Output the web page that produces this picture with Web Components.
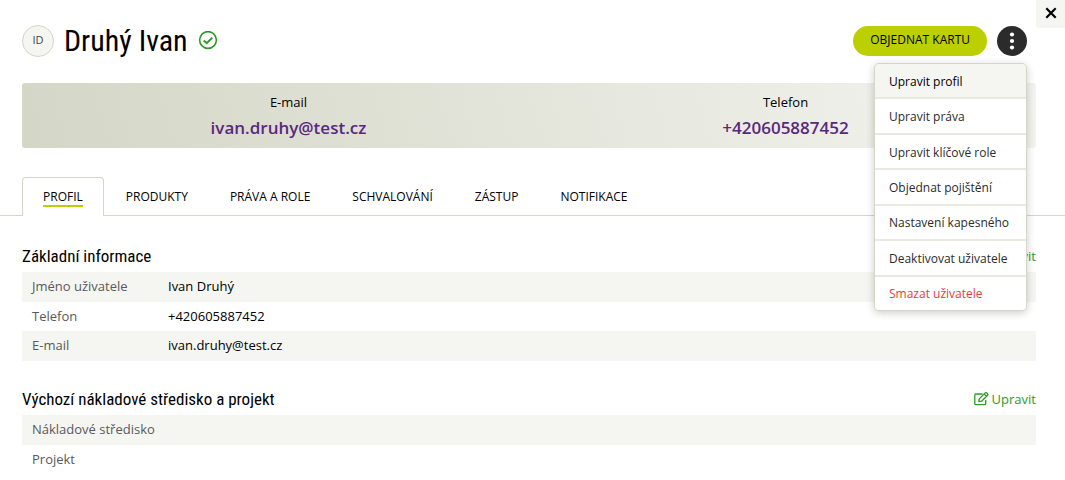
<!DOCTYPE html>
<html lang="cs">
<head>
<meta charset="utf-8">
<title>Druhý Ivan</title>
<meta name="viewport" content="width=device-width, initial-scale=1">
<style>
  :root {
    --ink: #000;
    --muted: #58595b;
    --pale: #f5f6f2;
    --line: #d4d6c8;
    --lime: #bccf00;
    --green: #2f9a2a;
    --purple: #59287d;
    --head: "Liberation Sans Narrow", "Roboto Condensed", "Roboto", sans-serif;
  }
  body { margin: 0; background: #fff; color: var(--ink); font: 13px/20px "Open Sans", sans-serif; }
</style>
</head>
<body>
<profile-page>
  <close-button slot="close"></close-button>
  <profile-header slot="header" initials="ID" name="Druhý Ivan">
    <pill-button>Objednat kartu</pill-button>
    <action-menu>
      <menu-item active>Upravit profil</menu-item>
      <menu-item>Upravit práva</menu-item>
      <menu-item>Upravit klíčové role</menu-item>
      <menu-item>Objednat pojištění</menu-item>
      <menu-item>Nastavení kapesného</menu-item>
      <menu-item>Deaktivovat uživatele</menu-item>
      <menu-item danger>Smazat uživatele</menu-item>
    </action-menu>
  </profile-header>
  <contact-banner slot="banner">
    <contact-item label="E-mail" href="mailto:ivan.druhy@test.cz">ivan.druhy@test.cz</contact-item>
    <contact-item label="Telefon" href="tel:+420605887452">+420605887452</contact-item>
  </contact-banner>
  <tab-bar slot="tabs">
    <tab-item active>Profil</tab-item>
    <tab-item>Produkty</tab-item>
    <tab-item>Práva a role</tab-item>
    <tab-item>Schvalování</tab-item>
    <tab-item>Zástup</tab-item>
    <tab-item>Notifikace</tab-item>
  </tab-bar>
  <info-section heading="Základní informace" rows='[["Jméno uživatele","Ivan Druhý"],["Telefon","+420605887452"],["E-mail","ivan.druhy@test.cz"]]'></info-section>
  <info-section heading="Výchozí nákladové středisko a projekt" rows='[["Nákladové středisko",""],["Projekt",""]]'></info-section>
</profile-page>

<script>
const define = (name, render) => customElements.define(name, class extends HTMLElement {
  connectedCallback() {
    if (this.shadowRoot) return;
    const root = this.attachShadow({ mode: "open" });
    root.innerHTML = "<style>*{box-sizing:border-box}button{font:inherit;cursor:pointer}</style>" + render(this);
  }
});

define("profile-page", () => `
  <style>
    :host { display: block; position: relative; }
    .inset { padding-left: 22px; padding-right: 29px; }
    header { padding-top: 25px; }
    .banner { padding-top: 26px; }
    .tabs { margin-top: 29px; }
    main { display: grid; gap: 28px; padding-top: 30px; padding-bottom: 4px; }
    .close { position: absolute; top: 0; right: 0; }
  </style>
  <header class="inset"><slot name="header"></slot></header>
  <div class="inset banner"><slot name="banner"></slot></div>
  <nav class="tabs"><slot name="tabs"></slot></nav>
  <main class="inset"><slot></slot></main>
  <div class="close"><slot name="close"></slot></div>`);

define("close-button", () => `
  <style>
    :host { display: block; }
    button { display: grid; place-items: center; width: 29px; height: 28px; padding: 0 0 2px; border: 0; border-radius: 0 0 0 4px; background: var(--pale); }
  </style>
  <button type="button" aria-label="Zavřít">
    <svg width="12" height="12" viewBox="0 0 12 12" fill="none" stroke="#000" stroke-width="2.2"><path d="M1.3 1.3l9.4 9.4M10.7 1.3l-9.4 9.4"/></svg>
  </button>`);

define("profile-header", el => `
  <style>
    :host { display: flex; align-items: center; height: 32px; padding-right: 9px; gap: 10px; }
    .avatar { display: grid; place-items: center; width: 32px; height: 32px; padding-bottom: 2px; border: 1px solid var(--line); border-radius: 50%; background: var(--pale); color: #444; font-size: 11px; line-height: 16px; }
    h1 { margin: 0; font: 400 30px/32px var(--head); }
    .actions { display: flex; gap: 10px; margin-left: auto; }
  </style>
  <span class="avatar">${el.getAttribute("initials")}</span>
  <h1>${el.getAttribute("name")}</h1>
  <svg width="20" height="20" viewBox="0 0 20 20" fill="none" stroke="var(--green)" role="img" aria-label="Ověřeno">
    <circle cx="10" cy="9" r="8.4" stroke-width="1.6"/><path d="M5.7 9.4l3 2.8 5.6-5.6" stroke-width="2"/>
  </svg>
  <div class="actions"><slot></slot></div>`);

define("pill-button", () => `
  <style>
    :host { display: block; }
    button { height: 30px; padding: 0 17px 2px; border: 0; border-radius: 15px; background: var(--lime); color: #000; font-size: 12px; font-weight: 500; line-height: 16px; text-transform: uppercase; }
  </style>
  <button type="button"><slot></slot></button>`);

define("action-menu", () => `
  <style>
    :host { display: block; position: relative; z-index: 2; }
    button { display: grid; place-items: center; width: 30px; height: 30px; padding: 0; border: 0; border-radius: 50%; background: #2b2b2b; }
    .list { position: absolute; top: 37px; right: 0; display: grid; grid-auto-rows: 1fr; gap: 2px; min-width: 153px; height: 248px; border: 1px solid var(--line); border-radius: 5px; overflow: hidden; background: #e8e9e1; box-shadow: 0 2px 8px rgba(0,0,0,.2); }
  </style>
  <button type="button" aria-label="Další akce" aria-expanded="true">
    <svg width="6" height="18" viewBox="0 0 6 18" fill="#fff"><circle cx="3" cy="2.5" r="2.1"/><circle cx="3" cy="9" r="2.1"/><circle cx="3" cy="15.5" r="2.1"/></svg>
  </button>
  <div class="list" role="menu"><slot></slot></div>`);

define("menu-item", () => `
  <style>
    :host { display: grid; }
    button { padding: 2px 14px 0; border: 0; background: #fff; color: #2b2b2b; font-size: 12px; line-height: 16px; text-align: left; white-space: nowrap; }
    :host([active]) button { background: var(--pale); color: #000; }
    :host([danger]) button { color: #e63c3c; }
  </style>
  <button type="button" role="menuitem"><slot></slot></button>`);

define("contact-banner", () => `
  <style>
    :host { display: grid; grid-template-columns: 1fr 1fr; align-items: center; height: 65px; padding: 0 2px 0 18px; border-radius: 3px; background: linear-gradient(75deg, #d4d6c6, #f3f4ef); }
  </style>
  <slot></slot>`);

define("contact-item", el => `
  <style>
    :host { display: grid; justify-items: center; gap: 4px; }
    a { color: var(--purple); font-size: 17px; font-weight: 600; line-height: 24px; text-decoration: none; }
  </style>
  <span>${el.getAttribute("label")}</span>
  <a href="${el.getAttribute("href")}"><slot></slot></a>`);

define("tab-bar", () => `
  <style>
    :host { display: flex; gap: 2px; height: 39px; padding: 0 22px; border-bottom: 1px solid var(--line); box-sizing: border-box; }
  </style>
  <slot></slot>`);

define("tab-item", () => `
  <style>
    :host { display: block; }
    a { display: flex; align-items: center; height: 39px; padding: 2px 20px 0; color: #000; font-size: 12px; font-weight: 500; line-height: 16px; text-decoration: none; text-transform: uppercase; white-space: nowrap; }
    span { border-bottom: 2px solid transparent; }
    :host([active]) a { border: 1px solid var(--line); border-bottom: 0; border-radius: 4px 4px 0 0; background: #fff; }
    :host([active]) span { border-color: var(--lime); }
  </style>
  <a href="#"><span><slot></slot></span></a>`);

define("info-section", el => `
  <style>
    :host { display: block; }
    .top { display: flex; align-items: center; justify-content: space-between; height: 26px; padding-bottom: 6px; }
    h2 { margin: 0; font: 400 17px/20px var(--head); }
    a { display: flex; align-items: center; gap: 3px; color: var(--green); text-decoration: none; }
    table { width: 100%; border-collapse: collapse; }
    th, td { height: 29px; padding: 0 10px 2px; text-align: left; font-weight: 400; }
    th { width: 136px; color: var(--muted); white-space: nowrap; }
    tr:nth-child(odd) > * { height: 30px; background: var(--pale); }
  </style>
  <div class="top">
    <h2>${el.getAttribute("heading")}</h2>
    <a href="#">
      <svg width="15" height="14" viewBox="0 0 15 14" fill="none" stroke="currentColor" stroke-width="1.3" stroke-linejoin="round"><path d="M8.5 2H1.8Q.8 2 .8 3v8.7q0 1 1 1h8.9q1 0 1-1V8"/><path d="M4.8 9.6l.4-2.7 6-6q.8-.6 1.6.1l.7.7q.7.8.1 1.6l-6 5.9zM10.1 2l2.4 2.4"/></svg>
      Upravit
    </a>
  </div>
  <table><tbody>${JSON.parse(el.getAttribute("rows")).map(([k, v]) =>
    `<tr><th scope="row">${k}</th><td>${v}</td></tr>`).join("")}</tbody></table>`);
</script>
</body>
</html>
